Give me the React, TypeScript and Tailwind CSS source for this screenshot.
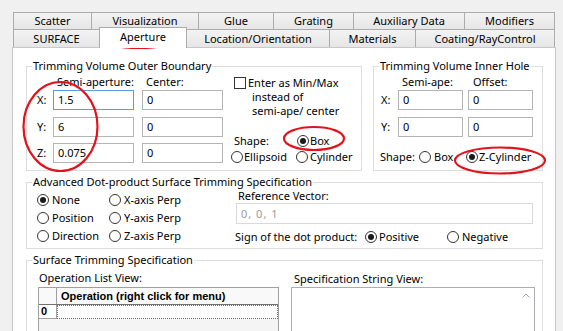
import React from "react";

function Radio({ checked }: { checked?: boolean }) {
  return (
    <span className="inline-flex h-[12px] w-[12px] shrink-0 items-center justify-center rounded-full border border-[#333] bg-white">
      {checked && <span className="h-[6px] w-[6px] rounded-full bg-[#1a1a1a]" />}
    </span>
  );
}

function RadioItem({ checked, label, className = "", gap = "gap-[2px]" }: { checked?: boolean; label: string; className?: string; gap?: string }) {
  return (
    <span className={`flex items-center ${gap} ${className}`}>
      <Radio checked={checked} />
      <span className="leading-[14px]">{label}</span>
    </span>
  );
}

function Field({ value, className = "", focus }: { value: string; className?: string; focus?: boolean }) {
  return (
    <div
      className={`h-[20px] shrink-0 border bg-white pl-[4px] leading-[18px] ${
        focus ? "border-[#5a9fe6]" : "border-[#b4b4b4]"
      } ${className}`}
    >
      {value}
    </div>
  );
}

function GroupBox({ title, className = "", children }: { title: string; className?: string; children?: React.ReactNode }) {
  return (
    <div className={`relative shrink-0 border border-[#dcdcdc] ${className}`}>
      <span className="absolute left-[5px] top-[-8px] bg-white px-[1px] leading-[14px] whitespace-nowrap">{title}</span>
      {children}
    </div>
  );
}

function Tab({ label, className = "" }: { label: string; className?: string }) {
  return (
    <div
      className={`flex shrink-0 items-center justify-center border-r border-t border-[#acacac] bg-linear-to-b from-[#f3f3f3] to-[#e6e6e6] leading-[14px] ${className}`}
    >
      {label}
    </div>
  );
}

export default function App() {
  return (
    <div className="relative h-[331px] w-[563px] overflow-hidden whitespace-nowrap bg-[#f0f0f0] pl-[12px] pt-[12px] font-['Noto_Sans',sans-serif] text-[11px] text-black">
      {/* Tabs row 1 */}
      <div className="ml-px flex h-[17px]">
        <Tab label="Scatter" className="w-[79px] border-l" />
        <Tab label="Visualization" className="w-[107px]" />
        <Tab label="Glue" className="w-[75px]" />
        <Tab label="Grating" className="w-[80px]" />
        <Tab label="Auxiliary Data" className="w-[111px]" />
        <Tab label="Modifiers" className="w-[90px]" />
      </div>
      {/* Tabs row 2 */}
      <div className="ml-px flex h-[18px] items-end">
        <Tab label="SURFACE" className="h-[18px] w-[87px] border-l" />
        <div className="relative z-10 -mb-px -ml-px flex h-[21px] w-[88px] shrink-0 items-center justify-center border-l border-r border-t border-[#acacac] bg-white pb-[2px] leading-[14px]">
          Aperture
        </div>
        <Tab label="Location/Orientation" className="h-[18px] w-[143px]" />
        <Tab label="Materials" className="h-[18px] w-[86px]" />
        <Tab label="Coating/RayControl" className="h-[18px] w-[139px]" />
      </div>

      {/* Panel */}
      <div className="h-[300px] w-[544px] border border-[#c9c9c9] bg-white pl-[13px] pt-[18px]">
        <div className="flex gap-[11px]">
          {/* Outer boundary */}
          <GroupBox title="Trimming Volume Outer Boundary" className="h-[105px] w-[336px]">
            <div className="flex pl-[10px]">
              <div className="flex flex-col">
                <div className="mt-[8px] flex h-[14px] items-center leading-[14px]">
                  <span className="ml-[20px] w-[89px]">Semi-aperture:</span>
                  <span>Center:</span>
                </div>
                <div className="mt-[1px] flex items-center">
                  <span className="w-[16px]">X:</span>
                  <Field value="1.5" className="w-[81px]" focus />
                  <Field value="0" className="ml-[8px] w-[81px]" />
                </div>
                <div className="mt-[7px] flex items-center">
                  <span className="w-[16px]">Y:</span>
                  <Field value="6" className="w-[81px]" />
                  <Field value="0" className="ml-[8px] w-[81px]" />
                </div>
                <div className="mt-[6px] flex items-center">
                  <span className="w-[16px]">Z:</span>
                  <Field value="0.075" className="w-[81px]" />
                  <Field value="0" className="ml-[8px] w-[81px]" />
                </div>
              </div>
              <div className="ml-[8px] flex flex-col">
                <div className="mt-[9px] flex flex-col leading-[14px]">
                  <div className="flex h-[14px] items-center">
                    <span className="ml-[3px] h-[12px] w-[12px] shrink-0 border border-[#333] bg-white" />
                    <span className="ml-[2px]">Enter as Min/Max</span>
                  </div>
                  <span className="h-[14px] pl-[21px]">instead of</span>
                  <span className="h-[14px] pl-[21px]">semi-ape/ center</span>
                </div>
                <div className="mt-[16px] flex h-[14px] items-center">
                  <span className="ml-[3px] w-[63px]">Shape:</span>
                  <RadioItem checked label="Box" gap="gap-[1px]" />
                </div>
                <div className="mt-[2px] flex h-[14px] items-center">
                  <RadioItem label="Ellipsoid" className="w-[65px]" gap="gap-[1px]" />
                  <RadioItem label="Cylinder" />
                </div>
              </div>
            </div>
          </GroupBox>

          {/* Inner hole */}
          <GroupBox title="Trimming Volume Inner Hole" className="h-[105px] w-[170px]">
            <div className="flex flex-col">
              <div className="mt-[8px] flex h-[14px] items-center pl-[28px]">
                <span className="w-[71px]">Semi-ape:</span>
                <span>Offset:</span>
              </div>
              <div className="mt-[1px] flex items-center pl-[7px]">
                <span className="w-[17px]">X:</span>
                <Field value="0" className="w-[65px]" />
                <Field value="0" className="ml-[5px] w-[65px]" />
              </div>
              <div className="mt-[7px] flex items-center pl-[7px]">
                <span className="w-[17px]">Y:</span>
                <Field value="0" className="w-[65px]" />
                <Field value="0" className="ml-[5px] w-[65px]" />
              </div>
              <div className="mt-[13px] flex h-[14px] items-center pl-[6px]">
                <span className="w-[39px]">Shape:</span>
                <RadioItem label="Box" className="w-[47px]" gap="gap-[3px]" />
                <RadioItem checked label="Z-Cylinder" gap="gap-[1px]" />
              </div>
            </div>
          </GroupBox>
        </div>

        {/* Advanced */}
        <GroupBox title="Advanced Dot-product Surface Trimming Specification" className="mt-[11px] h-[67px] w-[517px]">
          <div className="flex pl-[10px]">
            <div className="mt-[8px] flex w-[72px] flex-col">
              <RadioItem checked label="None" className="h-[18px]" gap="gap-[3px]" />
              <RadioItem label="Position" className="h-[18px]" gap="gap-[3px]" />
              <RadioItem label="Direction" className="h-[18px]" gap="gap-[3px]" />
            </div>
            <div className="mt-[8px] flex w-[126px] flex-col">
              <RadioItem label="X-axis Perp" className="h-[18px]" gap="gap-[3px]" />
              <RadioItem label="Y-axis Perp" className="h-[18px]" gap="gap-[3px]" />
              <RadioItem label="Z-axis Perp" className="h-[18px]" gap="gap-[3px]" />
            </div>
            <div className="mt-[6px] flex flex-col">
              <span className="h-[14px] pl-[3px] leading-[14px]">Reference Vector:</span>
              <div className="ml-px h-[21px] w-[297px] border border-[#d9d9d9] bg-white pl-[4px] leading-[19px] tracking-[1px] text-[#9a9a9a]">
                0, 0, 1
              </div>
              <div className="mt-[6px] flex h-[14px] items-center">
                <span className="w-[130px] leading-[14px]">Sign of the dot product:</span>
                <RadioItem checked label="Positive" className="w-[82px]" />
                <RadioItem label="Negative" gap="gap-[3px]" />
              </div>
            </div>
          </div>
        </GroupBox>

        {/* Surface trimming */}
        <GroupBox title="Surface Trimming Specification" className="mt-[11px] h-[120px] w-[517px]">
          <div className="flex pl-[11px]">
            <div className="flex flex-col">
              <span className="ml-px mt-[10px] h-[14px] leading-[14px]">Operation List View:</span>
              <div className="mt-[2px] flex h-[60px] w-[241px] flex-col border border-[#a0a0a0] bg-[#f4f4f4]">
                <div className="flex h-[17px] border-b border-[#707070] bg-[#f9f9f9]">
                  <div className="w-[18px] border-r border-[#a0a0a0]" />
                  <div className="flex-1 pl-[4px] font-['Liberation_Sans',sans-serif] text-[11px] font-bold leading-[16px]">
                    Operation (right click for menu)
                  </div>
                </div>
                <div className="flex h-[14px] bg-white">
                  <div className="w-[18px] border-b border-r border-[#a0a0a0] pl-[2px] font-['Liberation_Sans',sans-serif] text-[11px] font-bold leading-[13px]">
                    0
                  </div>
                  <div className="flex-1 border border-dotted border-[#707070]" />
                </div>
              </div>
            </div>
            <div className="ml-[12px] flex flex-col">
              <span className="ml-[3px] mt-[11px] h-[14px] leading-[14px]">Specification String View:</span>
              <div className="mt-px flex h-[60px] w-[244px] border border-[#abadb3] bg-white">
                <div className="flex-1" />
                <div className="flex w-[16px] justify-center pt-[5px]">
                  <svg width="8" height="5" viewBox="0 0 8 5">
                    <path d="M0.5 4.5 L4 1 L7.5 4.5" fill="none" stroke="#a8a8a8" strokeWidth="1" />
                  </svg>
                </div>
              </div>
            </div>
          </div>
        </GroupBox>
      </div>

      {/* Red annotation ellipses */}
      <svg className="pointer-events-none absolute left-0 top-0" width="563" height="331" viewBox="0 0 563 331">
        <g fill="none" stroke="#e3121c" strokeWidth="2.2">
          <ellipse cx="139" cy="39" rx="36" ry="9" />
          <ellipse cx="60.5" cy="126.5" rx="37" ry="44.5" />
          <ellipse cx="314" cy="138.5" rx="30" ry="11.5" />
          <ellipse cx="500" cy="160.5" rx="45" ry="13" />
        </g>
      </svg>
    </div>
  );
}
